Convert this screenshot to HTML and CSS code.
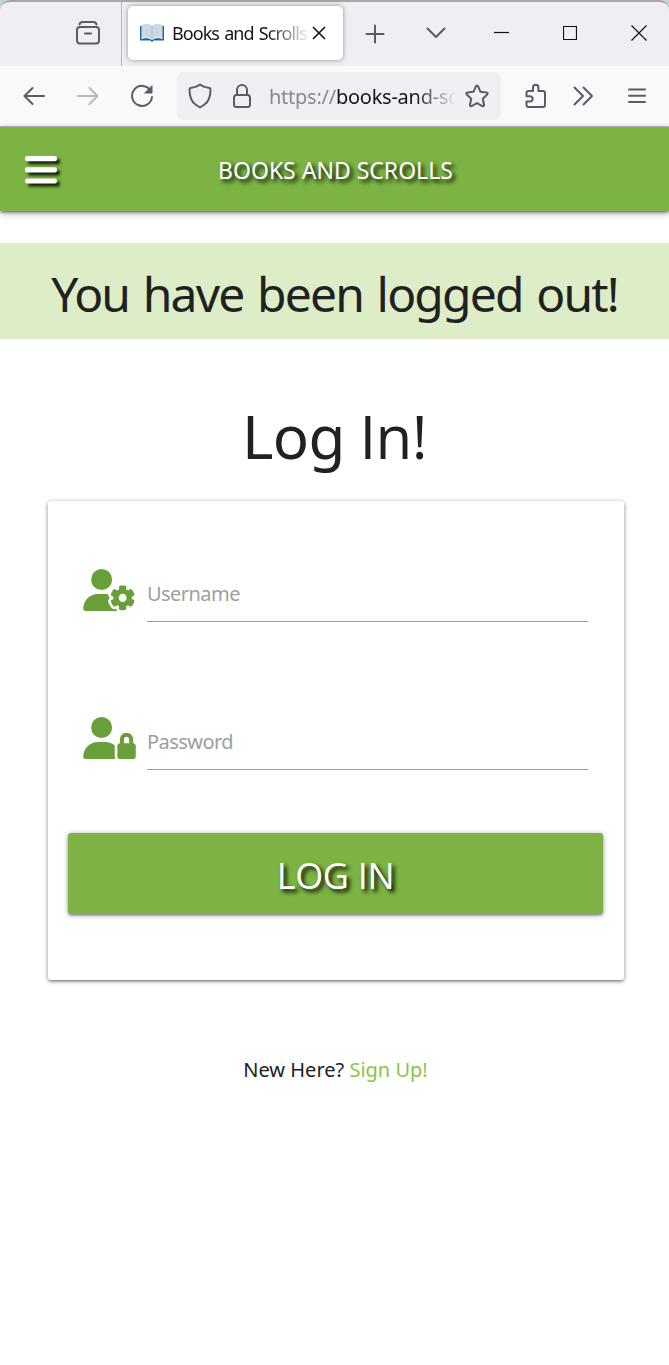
FILE: index.html
```html
<!DOCTYPE html>
<html lang="en">
<head>
<meta charset="utf-8">
<title>Books and Scrolls</title>
<link rel="stylesheet" href="styles.css">
</head>
<body>
<div class="window">
  <div class="tabstrip">
    <div class="pinned">
      <svg class="ico" width="26" height="26" viewBox="0 0 26 26"><path d="M4.500 4.500Q5 2 7.500 2H18.500Q21 2 21.500 4.500"/><rect x="2" y="7" width="22" height="16.500" rx="3"/><path d="M10 13.500h6"/></svg>
    </div>
    <div class="tab">
      <svg class="book" width="24" height="18" viewBox="0 0 24 18"><path d="M0 2h24v14.500H14l-2 1.500-2-1.500H0z" fill="#28669c"/><path d="M1.500 1Q8-1 12 1.500 16-1 22.500 1v13.500Q16 13 12 15.500 8 13 1.500 14.500z" fill="#cbd7e1"/><path d="M1.500 14.500Q8 12 12 15.500 16 12 22.500 14.500" fill="none" stroke="#f2f7fa"/><path d="M12 2v13" stroke="#b4c1cc" stroke-width="1"/></svg>
      <span class="tab-title"><span class="t-tab">Books and Scrolls</span></span>
      <svg class="dark" width="14" height="14" viewBox="0 0 14 14"><path d="M1 1l12 12M13 1L1 13"/></svg>
    </div>
    <svg class="ico plus" width="20" height="20" viewBox="0 0 20 20"><path d="M10 1.500v17M1.500 10h17"/></svg>
    <svg class="ico chevron" width="20" height="12" viewBox="0 0 20 12"><path d="M1.500 1.500L10 10l8.500-8.500"/></svg>
    <div class="controls">
      <svg width="15" height="16" viewBox="0 0 15 16"><path d="M0 7.500h15"/></svg>
      <svg width="14" height="14" viewBox="0 0 14 14"><path d="M.5.500h13v13H.5z"/></svg>
      <svg width="16" height="16" viewBox="0 0 16 16"><path d="M.5.500l15 15M15.500.500l-15 15"/></svg>
    </div>
  </div>
  <div class="toolbar">
    <svg class="ico back" width="22" height="20" viewBox="0 0 22 20"><path d="M21 10H1.500M9.500 2l-8 8 8 8"/></svg>
    <svg class="ico forward" width="22" height="20" viewBox="0 0 22 20"><path d="M1 10h19.500M12.500 2l8 8-8 8"/></svg>
    <svg class="ico reload" width="24" height="24" viewBox="0 0 24 24"><path d="M20.500 6.500A10 10 0 1 0 22 13"/><path d="M22 2v7h-7z" fill="#5b5b66" stroke-width="1"/></svg>
    <div class="urlbar">
      <svg class="ico" width="24" height="26" viewBox="0 0 24 26"><path d="M12 1.500Q15 4 21.500 5q1 .3 1 1.500 0 11-6 15L12 24.500 7.500 21.500q-6-4-6-15 0-1.200 1-1.500Q9 4 12 1.500z"/></svg>
      <svg class="ico lock" width="20" height="26" viewBox="0 0 20 26"><rect x="2" y="12" width="16" height="12" rx="2.500"/><path d="M5 12V7a5 5 0 0 1 10 0v5"/></svg>
      <span class="url"><span class="t-url"><span class="scheme">https://</span>books-and-sc</span></span>
      <svg class="ico" width="26" height="26" viewBox="0 0 26 26"><path d="M13 2.500q.8 0 1.200 1l2.300 5.300 6 .7q2 .4.700 2l-4.400 4.200 1.200 6q.2 2-1.700 1.400L13 20l-5.300 3.100Q5.800 23.700 6 21.700l1.200-6L2.800 11.500q-1.300-1.600.7-2l6-.7 2.300-5.300q.4-1 1.200-1z"/></svg>
    </div>
    <svg class="ico puzzle" width="22" height="26" viewBox="0 0 22 26"><path d="M3.500 8H8V4.500a2.700 2.700 0 0 1 5.400 0V8h4.600q2 0 2 2v12q0 2-2 2H3.500q-2 0-2-2v-3.500H5a2.600 2.600 0 0 0 0-5.300H1.500V10q0-2 2-2z"/></svg>
    <svg class="ico more" width="22" height="20" viewBox="0 0 22 20"><path d="M2.500 1.500L11 10l-8.500 8.500M11.500 1.500L20 10l-8.500 8.500"/></svg>
    <svg class="ico menu" width="18" height="16" viewBox="0 0 18 16"><path d="M1 1.500h16M1 7.700h16M1 13.900h16"/></svg>
  </div>
</div>
<header class="navbar">
  <svg class="burger" width="34" height="28" viewBox="0 0 34 28"><rect x="1" width="32" height="5.200" rx="2"/><rect x="1" y="11.200" width="32" height="5.200" rx="2"/><rect x="1" y="22.400" width="32" height="5.200" rx="2"/></svg>
  <span class="brand">BOOKS AND SCROLLS</span>
</header>
<main>
  <div class="flash"><span class="t-flash">You have been logged out!</span></div>
  <h1>Log <span class="plain">In!</span></h1>
  <form class="card">
    <div class="field">
      <svg class="user" width="53" height="42" viewBox="0 0 640 512"><path d="M224 0a128 128 0 1 1 0 256A128 128 0 1 1 224 0zM178.300 304l91.400 0c11.800 0 23.400 1.200 34.500 3.300c-2.100 18.500 7.400 35.600 21.800 44.800c-16.600 10.600-26.700 31.600-20 53.300c4 12.900 9.400 25.500 16.400 37.600s15.200 23.100 24.400 33c15.700 16.900 39.600 18.400 57.200 8.700l0 .9c0 9.200 2.700 18.500 7.900 26.300L29.700 512C13.300 512 0 498.700 0 482.300C0 383.800 79.800 304 178.300 304zM436 218.200c0-7 4.500-13.300 11.300-14.800c10.500-2.400 21.500-3.700 32.700-3.700s22.200 1.300 32.700 3.700c6.800 1.500 11.300 7.800 11.300 14.800l0 30.600c7.900 3.400 15.400 7.700 22.300 12.800l24.900-14.300c6.100-3.500 13.700-2.700 18.500 2.400c7.600 8.100 14.300 17.200 20.100 27.200s10.300 20.400 13.500 31c2.100 6.700-1.100 13.700-7.200 17.200l-25 14.400c.4 4 .7 8.100 .7 12.300s-.2 8.200-.7 12.300l25 14.400c6.100 3.500 9.200 10.500 7.200 17.200c-3.300 10.600-7.800 21-13.500 31s-12.500 19.100-20.100 27.200c-4.800 5.100-12.500 5.900-18.500 2.400l-24.900-14.300c-6.900 5.100-14.300 9.400-22.300 12.800l0 30.600c0 7-4.500 13.300-11.300 14.800c-10.500 2.400-21.500 3.700-32.700 3.700s-22.200-1.300-32.700-3.700c-6.800-1.500-11.300-7.800-11.300-14.800l0-30.500c-8-3.400-15.600-7.700-22.500-12.900l-24.700 14.300c-6.100 3.500-13.700 2.700-18.500-2.400c-7.600-8.100-14.300-17.200-20.100-27.200s-10.300-20.400-13.500-31c-2.100-6.700 1.100-13.700 7.200-17.200l24.800-14.300c-.4-4.100-.7-8.200-.7-12.400s.2-8.300 .7-12.400L343.800 325c-6.100-3.500-9.200-10.500-7.200-17.200c3.300-10.600 7.700-21 13.500-31s12.500-19.100 20.100-27.200c4.800-5.100 12.400-5.900 18.500-2.400l24.800 14.300c6.900-5.100 14.500-9.400 22.500-12.900l0-30.500zm92.100 133.500a48.100 48.100 0 1 0 -96.100 0 48.100 48.100 0 1 0 96.100 0z"/></svg>
      <div class="input"><span class="t-user">Username</span></div>
    </div>
    <div class="field">
      <svg class="user" width="53" height="42" viewBox="0 0 640 512"><path d="M224 256A128 128 0 1 0 224 0a128 128 0 1 0 0 256zm-45.700 48C79.800 304 0 383.800 0 482.300C0 498.700 13.300 512 29.700 512l362.800 0c-5.400-9.400-8.600-20.300-8.600-32l0-128c0-2.100 .1-4.200 .3-6.300c-31-26-71-41.700-114.600-41.700l-91.400 0zM528 240c17.700 0 32 14.300 32 32l0 48-64 0 0-48c0-17.700 14.300-32 32-32zm-80 32l0 48c-17.700 0-32 14.300-32 32l0 128c0 17.700 14.300 32 32 32l160 0c17.700 0 32-14.300 32-32l0-128c0-17.700-14.300-32-32-32l0-48c0-44.200-35.800-80-80-80s-80 35.800-80 80z"/></svg>
      <div class="input"><span class="t-pass">Password</span></div>
    </div>
    <div class="submit"><span class="t-btn">LOG IN</span></div>
  </form>
  <p class="signup"><span class="t-sign">New Here? <a>Sign Up!</a></span></p>
</main>
</body>
</html>
```
FILE: styles.css
```css
* { box-sizing: border-box; }
body { margin: 0; width: 669px; height: 1365px; overflow: hidden; background: #fff; color: #212121; font-family: "Noto Sans", "Open Sans", sans-serif; }
svg { display: block; flex: none; }
span { white-space: nowrap; }

.window { height: 127px; background: linear-gradient(#c8d3d8, #c8d3d8 8px, #f9f9fb 8px); border-bottom: 1px solid #c6c6cb; }
.ico { fill: none; stroke: #5b5b66; stroke-width: 2; stroke-linecap: round; stroke-linejoin: round; }
.tabstrip { height: 66px; display: flex; align-items: center; background: #efeef3; border-top: 2px solid #a2a7aa; border-radius: 10px 10px 0 0; }
.pinned { width: 122px; height: 64px; padding: 18px 0 0 75px; border-right: 1px solid #b5b5bb; }
.tab { width: 215px; height: 54px; margin: -2px 0 0 6px; padding: 0 16px 0 12px; display: flex; align-items: center; background: #fff; border-radius: 5px; box-shadow: 0 0 5px rgba(0, 0, 0, .4); }
.tab-title { width: 137px; height: 30px; margin: 1px 3px 0 8px; line-height: 28px; overflow: hidden; font-size: 18px; letter-spacing: -.95px; word-spacing: 1.5px; color: #15141a; -webkit-mask-image: linear-gradient(90deg, #000 95px, transparent 139px); mask-image: linear-gradient(90deg, #000 95px, transparent 139px); }
.dark { fill: none; stroke: #15141a; stroke-width: 1.6; }
.plus { margin: 0 0 0 22px; }
.chevron { margin: -2px 0 0 41px; }
.controls { display: flex; align-items: center; margin: -2px 0 0 48px; gap: 54px; }
.controls svg { fill: none; stroke: #111; stroke-width: 1.2; }

.toolbar { height: 60px; display: flex; align-items: center; }
.back { margin-left: 23px; }
.forward { margin-left: 32px; opacity: .4; }
.reload { margin-left: 31px; }
.urlbar { width: 324px; height: 48px; margin-left: 23px; padding: 0 11px; display: flex; align-items: center; background: #f0f0f4; border-radius: 6px; }
.lock { margin-left: 20px; }
.url { width: 187px; height: 32px; margin: 1px 8px 0 17px; overflow: hidden; line-height: 32px; font-size: 20px; letter-spacing: -.25px; color: #15141a; -webkit-mask-image: linear-gradient(90deg, #000 145px, transparent 187px); mask-image: linear-gradient(90deg, #000 145px, transparent 187px); }
.scheme { color: #88888e; }
.puzzle { margin-left: 24px; }
.more { margin-left: 25px; }
.menu { margin-left: 34px; }

.navbar { position: relative; height: 84px; padding-left: 24px; display: flex; align-items: center; background: #7cb342; box-shadow: 0 2px 2px 0 rgba(0,0,0,.14), 0 3px 1px -2px rgba(0,0,0,.12), 0 1px 5px 0 rgba(0,0,0,.4), 0 4px 8px rgba(0,0,0,.12); }
.burger { fill: #fff; overflow: visible; filter: drop-shadow(3px 3px 1.5px rgba(0,0,0,.85)); margin-top: 1px; }
.brand { margin: 1px 0 0 160px; font-size: 23px; line-height: 32px; color: #fff; text-shadow: 3px 3px 4px #000; }

.flash { height: 96px; margin-top: 32px; text-align: center; background: #dcedc8; font-size: 48px; line-height: 101px; }
.t-flash { letter-spacing: -1.85px; word-spacing: 3px; }
h1 { margin: 56px 0 0; height: 84px; text-align: center; font-size: 60px; line-height: 82px; font-weight: 400; letter-spacing: -.7px; }
.plain { font-family: "Open Sans", sans-serif; }
.card { width: 576px; height: 479px; margin: 22px 0 0 48px; padding: 58px 20px 0; border-radius: 3px; background: #fff; box-shadow: 0 2px 2px 0 rgba(0,0,0,.14), 0 3px 1px -2px rgba(0,0,0,.12), 0 1px 5px 0 rgba(0,0,0,.4); }
.field { height: 63px; margin-bottom: 85px; padding: 0 16px 0 15px; display: flex; }
.user { margin-top: 10px; fill: #689f38; }
.input { flex: 1; margin-left: 11px; border-bottom: 1px solid #9e9e9e; font-size: 20px; line-height: 69px; color: #9e9e9e; letter-spacing: -.55px; }
.submit { height: 81px; width: 535px; margin-top: -22px; border-radius: 3px; background: #7cb342; color: #fff; text-align: center; font-family: "Open Sans", sans-serif; font-size: 36px; letter-spacing: -.3px; line-height: 86px; text-shadow: 3px 3px 4px #000; box-shadow: 0 2px 2px 0 rgba(0,0,0,.14), 0 3px 1px -2px rgba(0,0,0,.12), 0 1px 5px 0 rgba(0,0,0,.4); }
.signup { margin: 74px 0 0 2px; text-align: center; font-size: 20px; line-height: 32px; letter-spacing: 0; }
.signup a { color: #8bc34a; }
```
